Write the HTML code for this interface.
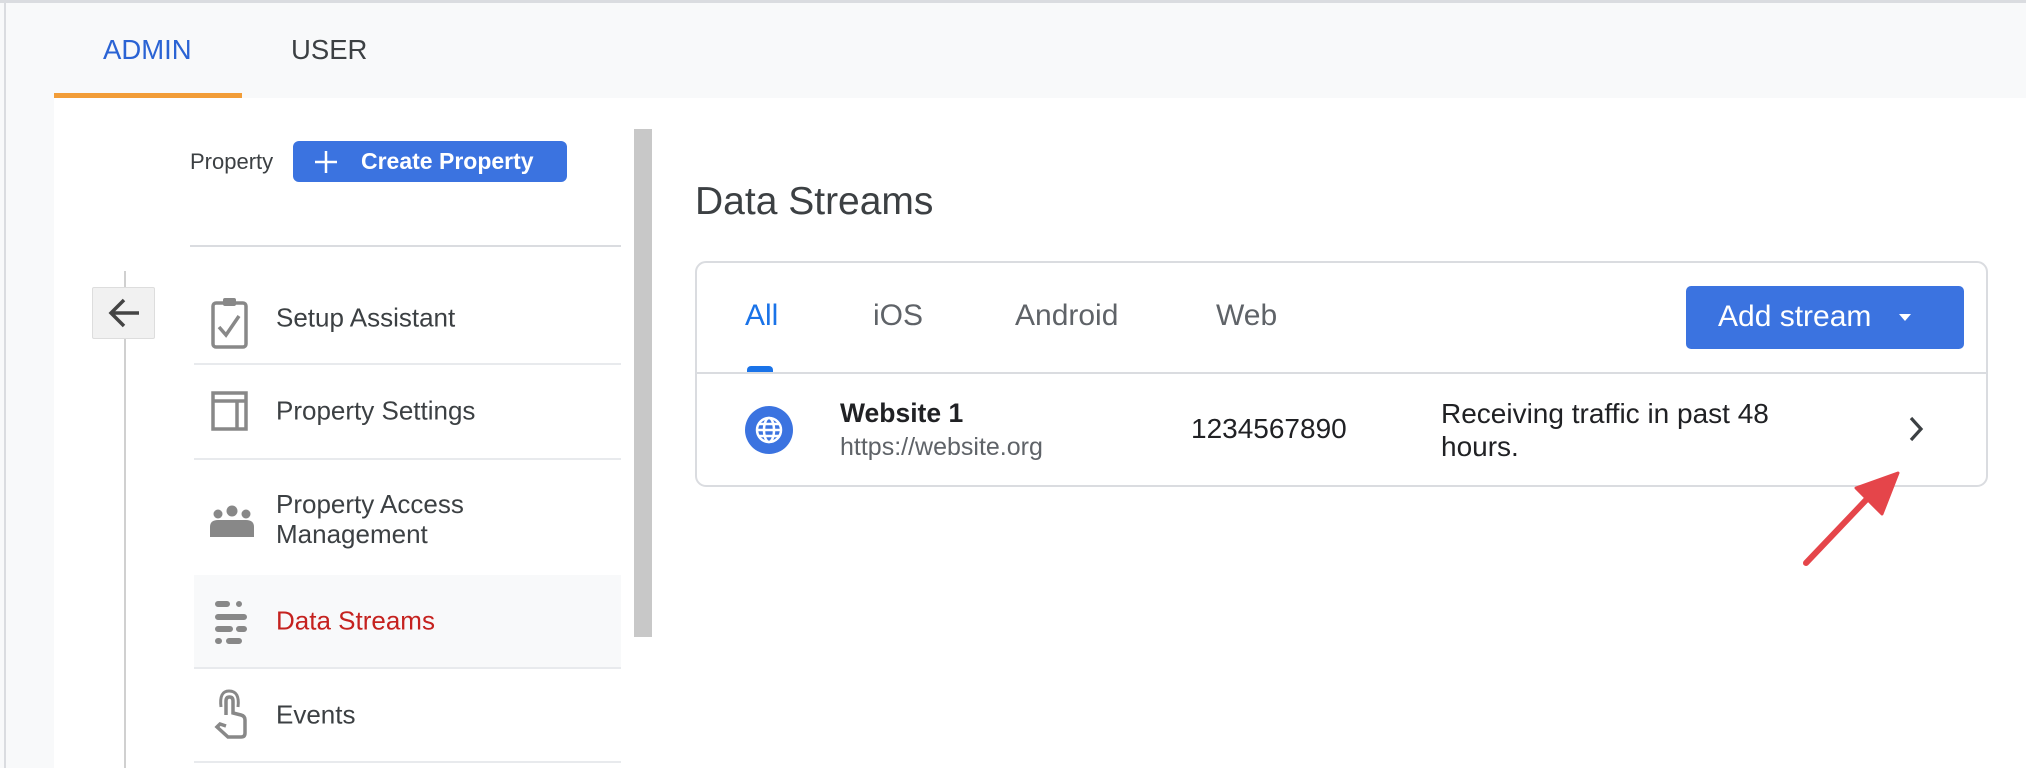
<!DOCTYPE html>
<html><head><meta charset="utf-8"><style>
*{margin:0;padding:0;box-sizing:border-box}
body{width:2026px;height:768px;overflow:hidden;background:#f8f9fa;font-family:"Liberation Sans",sans-serif;position:relative;color:#3c4043}
.a{position:absolute;white-space:nowrap}
.hr{position:absolute;height:2px;background:#e8eaed}
.nav{position:absolute;left:276px;font-size:26px;color:#3c4043;transform:translateY(-50%)}
</style></head><body>
<div class="a" style="left:0;top:0;width:2026px;height:3px;background:#dadce0"></div>
<div class="a" style="left:4px;top:0;width:2px;height:768px;background:#dadce0"></div>
<div class="a" style="left:103px;top:34px;font-size:27.5px;color:#2a63d4">ADMIN</div>
<div class="a" style="left:291px;top:34px;font-size:27.5px;color:#3c4043">USER</div>
<div class="a" style="left:54px;top:98px;width:1972px;height:670px;background:#fff"></div>
<div class="a" style="left:54px;top:93px;width:188px;height:5px;background:#f29d38"></div>

<div class="a" style="left:190px;top:149px;font-size:22px;color:#3c4043">Property</div>
<div class="a" style="left:293px;top:141px;width:274px;height:41px;background:#3b73e0;border-radius:6px;color:#fff;font-size:23px;font-weight:bold">
<svg style="position:absolute;left:21px;top:9px" width="24" height="24"><path d="M12 1V23M1 12H23" stroke="#fff" stroke-width="2.5"/></svg>
<span style="position:absolute;left:68px;top:7px">Create Property</span></div>
<div class="hr" style="left:190px;top:245px;width:431px;background:#dadce0"></div>
<div class="a" style="left:634px;top:129px;width:18px;height:508px;background:#c8c8c8"></div>
<div class="a" style="left:124px;top:271px;width:2px;height:497px;background:#d0d0d0"></div>
<div class="a" style="left:92px;top:287px;width:63px;height:52px;background:#f1f1f1;border:1px solid #ddd;border-radius:2px">
<svg style="position:absolute;left:14px;top:8px" width="34" height="34"><path d="M32 17H4M17 4L4 17L17 30" stroke="#444" stroke-width="3.5" fill="none"/></svg></div>

<svg class="a" style="left:211px;top:296px" width="40" height="56"><rect x="2" y="7" width="33" height="44" rx="3" fill="none" stroke="#888" stroke-width="3.5"/><rect x="12" y="2" width="13" height="8" rx="2" fill="#888"/><path d="M8 31L15 39L28 20" stroke="#888" stroke-width="3.5" fill="none"/></svg>
<div class="nav" style="top:318px">Setup Assistant</div>
<div class="hr" style="left:194px;top:363px;width:427px"></div>
<svg class="a" style="left:211px;top:391px" width="38" height="40"><rect x="2" y="2" width="33" height="36" fill="none" stroke="#888" stroke-width="3.5"/><path d="M2 10H35M26 10V38" stroke="#888" stroke-width="3.5"/></svg>
<div class="nav" style="top:411px">Property Settings</div>
<div class="hr" style="left:194px;top:458px;width:427px"></div>
<svg class="a" style="left:209px;top:502px" width="46" height="36"><circle cx="9" cy="12" r="4.5" fill="#888"/><circle cx="23" cy="9" r="5.5" fill="#888"/><circle cx="37" cy="12" r="4.5" fill="#888"/><path d="M1 35V25Q1 18 9 18H37Q45 18 45 25V35Z" fill="#888"/></svg>
<div class="nav" style="top:519px;line-height:30px">Property Access<br>Management</div>
<div class="a" style="left:194px;top:575px;width:427px;height:93px;background:#f8f9fa"></div>
<svg class="a" style="left:211px;top:598px" width="38" height="52"><g stroke="#888" stroke-width="6" stroke-linecap="round"><path d="M7 6H16M28 6H28M7 19H33M7 31H19M28 31H33M7 43H8M18 43H28M33 19H33"/></g></svg>
<div class="nav" style="top:621px;color:#c5221f">Data Streams</div>
<div class="hr" style="left:194px;top:667px;width:427px"></div>
<svg class="a" style="left:211px;top:689px" width="36" height="50"><path d="M15 26V12Q15 8 18.5 8Q22 8 22 12V24L30 26Q34 27 34 31V44Q34 48 30 48H17L6 38L9 35L15 37" fill="none" stroke="#888" stroke-width="3.5"/><path d="M10 18Q8 2 18 2Q29 2 27 18" fill="none" stroke="#888" stroke-width="3"/></svg>
<div class="nav" style="top:715px">Events</div>
<div class="hr" style="left:194px;top:761px;width:427px"></div>

<div class="a" style="left:695px;top:180px;font-size:39px;color:#3c4043">Data Streams</div>
<div class="a" style="left:695px;top:261px;width:1293px;height:226px;border:2px solid #dadce0;border-radius:11px"></div>
<div class="a" style="left:745px;top:299px;font-size:30px;color:#1a73e8">All</div>
<div class="a" style="left:873px;top:299px;font-size:30px;color:#5f6368">iOS</div>
<div class="a" style="left:1015px;top:299px;font-size:30px;color:#5f6368">Android</div>
<div class="a" style="left:1216px;top:299px;font-size:30px;color:#5f6368">Web</div>
<div class="a" style="left:747px;top:366px;width:26px;height:7px;background:#1a73e8;border-radius:4px 4px 0 0"></div>
<div class="a" style="left:697px;top:372px;width:1289px;height:2px;background:#dadce0"></div>
<div class="a" style="left:1686px;top:286px;width:278px;height:63px;background:#3b73e0;border-radius:5px;color:#fff;font-size:30px">
<span style="position:absolute;left:32px;top:14px">Add stream</span>
<svg style="position:absolute;left:212px;top:27px" width="14" height="10"><path d="M1 1H13L7 8Z" fill="#fff"/></svg></div>
<svg class="a" style="left:745px;top:406px" width="48" height="48"><circle cx="24" cy="24" r="24" fill="#3b73e0"/><g fill="none" stroke="#fff" stroke-width="2.5"><circle cx="24" cy="24" r="12"/><ellipse cx="24" cy="24" rx="5" ry="12"/><path d="M12 24H36M14 18H34M14 30H34"/></g></svg>
<div class="a" style="left:840px;top:398px;font-size:26.5px;font-weight:bold;color:#202124">Website 1</div>
<div class="a" style="left:840px;top:433px;font-size:25px;color:#5f6368">https://website.org</div>
<div class="a" style="left:1191px;top:413px;font-size:28px;color:#202124">1234567890</div>
<div class="a" style="left:1441px;top:397px;font-size:28px;color:#202124;line-height:33px">Receiving traffic in past 48<br>hours.</div>
<svg class="a" style="left:1906px;top:415px" width="20" height="28"><path d="M5 3L15 14L5 25" stroke="#3c4043" stroke-width="3.2" fill="none"/></svg>
<svg class="a" style="left:1790px;top:460px" width="120" height="120"><path d="M16 103L76 40" stroke="#e5454a" stroke-width="6" stroke-linecap="round"/><path d="M108 13L66 28L92 54Z" fill="#e5454a" stroke="#e5454a" stroke-width="3" stroke-linejoin="round"/></svg>
</body></html>
